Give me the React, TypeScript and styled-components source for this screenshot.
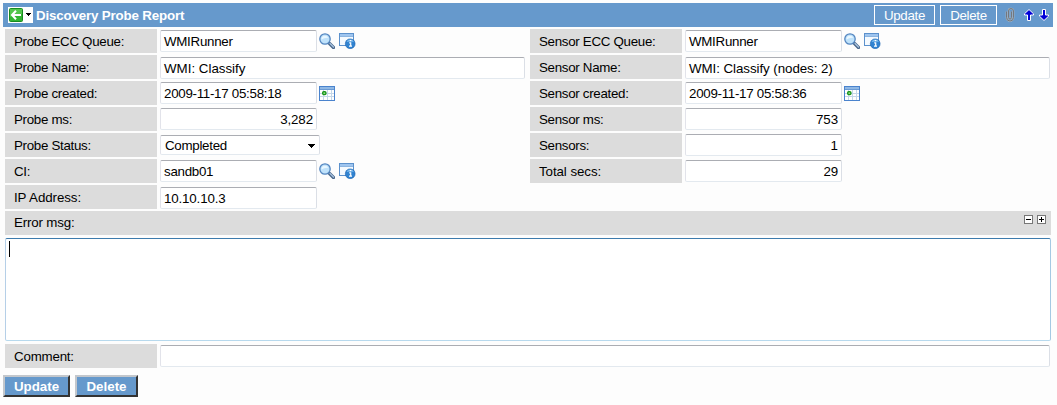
import React from "react";
import styled, { createGlobalStyle } from "styled-components";

const Global = createGlobalStyle`
  * { box-sizing: border-box; }
  body { margin: 0; background: #fdfdfd; color: #000; font: 13.33px/16px "Liberation Sans", Arial, sans-serif; }
  svg { display: block; flex: none; }
`;

const Page = styled.main`
  width: 1057px;
  height: 405px;
  padding: 3px 4px 0 3px;
  overflow: hidden;
`;

const Header = styled.header`
  display: flex;
  align-items: center;
  height: 24px;
  padding: 0 2px 0 5px;
  background: #6699cc;
`;

const BackButton = styled.button`
  display: flex;
  align-items: center;
  width: 25px;
  height: 16px;
  padding: 0;
  border: 0;
  background: #fff;
`;

const Title = styled.h1`
  flex: 1;
  margin: 0 0 0 3px;
  padding-top: 2px;
  color: #fff;
  font-size: 13.33px;
  letter-spacing: -0.16px;
  line-height: 16px;
  font-weight: bold;
`;

const HeaderButton = styled.button<{ $width: number }>`
  width: ${(p) => p.$width}px;
  height: 20px;
  margin-right: 5px;
  padding: 2px 0 0;
  border: 1px solid #fff;
  background: #6699cc;
  color: #fff;
  font: 13.33px/16px "Liberation Sans", Arial, sans-serif;
  letter-spacing: -0.3px;
`;

const HeaderIcons = styled.div`
  display: flex;
  align-items: center;
  width: 49px;
  padding-left: 1px;
`;

const Arrows = styled.div`
  display: flex;
  gap: 3px;
  margin-left: 6px;
`;

const Columns = styled.div`
  display: grid;
  grid-template-columns: 525px 1fr;
  align-items: start;
  padding: 2px 0 0 2px;
`;

const Column = styled.div`
  display: flex;
  flex-direction: column;
  gap: 2px;
`;

const Row = styled.div`
  display: flex;
  align-items: flex-start;
  height: 24px;
`;

const Label = styled.label<{ $spacing?: number }>`
  flex: none;
  width: 152px;
  height: 24px;
  margin-right: 3px;
  padding: 5px 9px 3px;
  background: #dcdcdc;
  letter-spacing: ${(p) => p.$spacing ?? -0.3}px;
  white-space: nowrap;
`;

const Field = styled.div<{ $width: number; $right?: boolean; $drop?: number; $spacing?: number }>`
  flex: none;
  width: ${(p) => p.$width}px;
  height: 22px;
  margin-top: ${(p) => p.$drop ?? 1}px;
  padding: 3px 3px 0;
  border: 1px solid;
  border-color: #abadb3 #dbdfe6 #e3e9ef #e2e3ea;
  border-radius: 2px;
  background: #fff;
  letter-spacing: ${(p) => p.$spacing ?? -0.28}px;
  text-align: ${(p) => (p.$right ? "right" : "left")};
  white-space: nowrap;
`;

const Select = styled(Field)`
  display: flex;
  justify-content: space-between;
  height: 20px;
  margin-top: 2px;
  padding: 2px 4px 0;
`;

const Tools = styled.div<{ $top?: number }>`
  display: flex;
  gap: 4px;
  margin: ${(p) => p.$top ?? 4}px 0 0 2px;
`;

const SectionBar = styled.div`
  display: flex;
  justify-content: space-between;
  width: 1046px;
  height: 24px;
  margin: 2px 0 0 2px;
  padding: 4px 5px 0 9px;
  background: #dcdcdc;
  letter-spacing: -0.18px;
`;

const Sizers = styled.div`
  display: flex;
  gap: 4px;
`;

const ErrorBox = styled.div`
  width: 1046px;
  height: 103px;
  margin: 3px 0 3px 2px;
  padding: 2px 3px;
  border: 1px solid;
  border-color: #3d7bad #a4c9e3 #b7d9ed #b5cfe7;
  border-radius: 2px;
  background: #fff;
`;

const Caret = styled.div`
  width: 1px;
  height: 16px;
  background: #000;
`;

const CommentRow = styled(Row)`
  margin-left: 2px;
`;

const Actions = styled.div`
  display: flex;
  gap: 5px;
  margin-top: 7px;
`;

const ActionButton = styled.button<{ $width: number }>`
  width: ${(p) => p.$width}px;
  height: 22px;
  padding: 2px 0 0;
  border: 2px solid;
  border-color: #c3c7cc #333 #333 #c3c7cc;
  background: #6699cc;
  color: #fff;
  font: bold 13.33px/16px "Liberation Sans", Arial, sans-serif;
`;

const BackIcon = () => (
  <svg width="25" height="16" viewBox="0 0 25 16">
    <rect x="1.5" y="1.5" width="13" height="13" rx="1" fill="#32b432" stroke="#188a20" />
    <path d="M2 2h12v5Q8 7 2 10Z" fill="#65cf5b" opacity=".65" />
    <path d="M8 3.7 4 8l4 4.3M4.5 8H13" fill="none" stroke="#fff" strokeWidth="2" />
    <path d="M18 6h5v1h-1v1h-1v1h-1V8h-1V7h-1Z" fill="#000" />
  </svg>
);

const clipPath = "M3.5 4.5v6a3.5 3.5 0 0 0 7 0V4a2.5 2.5 0 0 0-5 0v6.5a1.5 1.5 0 0 0 3 0V4.5";

const ClipIcon = () => (
  <svg width="14" height="16" viewBox="0 0 14 16">
    <path d={clipPath} fill="none" stroke="#b5bcc2" strokeWidth="1.6" />
    <path d={clipPath} fill="none" stroke="#62666c" strokeWidth=".8" />
  </svg>
);

const ArrowIcon = ({ down }: { down?: boolean }) => (
  <svg width="12" height="14" viewBox="0 0 12 14">
    <path
      d={down ? "M4.5 1.5h3V7h3v1.2L6 12.5 1.5 8.2V7h3Z" : "M4.5 12.5h3V7h3V5.8L6 1.5 1.5 5.8V7h3Z"}
      fill="#0000d8"
      stroke="#fff"
    />
  </svg>
);

const SearchIcon = () => (
  <svg width="16" height="16" viewBox="0 0 16 16">
    <path d="m10.5 10.5 4 4" stroke="#47658a" strokeWidth="3.2" strokeLinecap="round" />
    <path d="m11 10.5 3.5 3.5" stroke="#a9c3df" strokeWidth="1.3" strokeLinecap="round" />
    <circle cx="6" cy="6" r="5.2" fill="#bfe2fb" stroke="#5486c0" strokeWidth="1.3" />
    <path d="M2.5 6.5A3.6 3.6 0 0 1 6 2.7c2 0 3 1 3.2 2Q5 4.5 2.5 6.5Z" fill="#e9f7ff" />
  </svg>
);

const InfoIcon = () => (
  <svg width="17" height="16" viewBox="0 0 17 16">
    <rect x=".5" y=".5" width="14" height="12" fill="#f5faff" stroke="#5c91cc" />
    <path d="M1 1h13v2H1Z" fill="#9fc5ef" />
    <path d="M1 3.5h13" stroke="#8db5e0" />
    <circle cx="11.2" cy="10.8" r="4.9" fill="#3183d1" stroke="#1e65b0" strokeWidth=".6" />
    <path d="M7.5 9a4 4 0 0 1 7.4 0q-3-1-7.4 0Z" fill="#78b9ee" />
    <path d="M10.7 7.7h1.6M10.2 9.8h1.5v3.2M10 13.2h3" fill="none" stroke="#fff" strokeWidth="1.2" />
  </svg>
);

const CalendarIcon = () => (
  <svg width="16" height="15" viewBox="0 0 16 15">
    <rect x=".5" y=".5" width="15" height="14" fill="#fff" stroke="#4a83cd" />
    <path d="M1 1h14v2H1Z" fill="#8fb8e5" />
    <path d="M1 3.5h14" stroke="#6a9bd5" />
    <path d="M4.5 4v10M8.5 4v10M12.5 4v10M1 7.5h14M1 10.5h14" stroke="#c5d7e9" />
    <rect x="3.7" y="5.7" width="3.2" height="2.8" rx="1" fill="#b8f0a0" stroke="#16941a" strokeWidth="1.4" />
  </svg>
);

const SizeIcon = ({ plus }: { plus?: boolean }) => (
  <svg width="9" height="9" viewBox="0 0 9 9">
    <rect x=".5" y=".5" width="8" height="8" fill="#fff" stroke="#777" />
    <path d={plus ? "M2 4.5h5M4.5 2v5" : "M2 4.5h5"} stroke="#000" />
  </svg>
);

const SelectArrow = () => (
  <svg width="7" height="16" viewBox="0 0 7 16">
    <path d="M0 6h7v1H6v1H5v1H4v1H3V9H2V8H1V7H0Z" fill="#000" />
  </svg>
);

type Item = {
  label: string;
  value: string;
  width?: number;
  right?: boolean;
  drop?: number;
  labelSpacing?: number;
  spacing?: number;
  kind?: "lookup" | "date" | "select";
};

const probe: Item[] = [
  { label: "Probe ECC Queue:", value: "WMIRunner", kind: "lookup" },
  { label: "Probe Name:", value: "WMI: Classify", width: 365, drop: 2, spacing: 0 },
  { label: "Probe created:", value: "2009-11-17 05:58:18", kind: "date" },
  { label: "Probe ms:", value: "3,282", right: true, spacing: -0.1 },
  { label: "Probe Status:", value: "Completed", width: 160, kind: "select" },
  { label: "CI:", value: "sandb01", kind: "lookup" },
  { label: "IP Address:", value: "10.10.10.3", drop: 2, labelSpacing: -0.08, spacing: -0.15 },
];

const sensor: Item[] = [
  { label: "Sensor ECC Queue:", value: "WMIRunner", kind: "lookup" },
  { label: "Sensor Name:", value: "WMI: Classify (nodes: 2)", width: 365, drop: 2, spacing: -0.06 },
  { label: "Sensor created:", value: "2009-11-17 05:58:36", kind: "date" },
  { label: "Sensor ms:", value: "753", right: true, spacing: -0.1 },
  { label: "Sensors:", value: "1", right: true, spacing: 0 },
  { label: "Total secs:", value: "29", right: true, labelSpacing: -0.08, spacing: -0.1 },
];

const FormRow = ({ item }: { item: Item }) => (
  <Row>
    <Label $spacing={item.labelSpacing}>{item.label}</Label>
    {item.kind === "select" ? (
      <Select $width={item.width ?? 157}>
        {item.value}
        <SelectArrow />
      </Select>
    ) : (
      <Field $width={item.width ?? 157} $right={item.right} $drop={item.drop} $spacing={item.spacing}>
        {item.value}
      </Field>
    )}
    {item.kind === "lookup" && (
      <Tools>
        <SearchIcon />
        <InfoIcon />
      </Tools>
    )}
    {item.kind === "date" && (
      <Tools $top={5}>
        <CalendarIcon />
      </Tools>
    )}
  </Row>
);

export default function App() {
  return (
    <Page>
      <Global />
      <Header>
        <BackButton aria-label="Back">
          <BackIcon />
        </BackButton>
        <Title>Discovery Probe Report</Title>
        <HeaderButton $width={61}>Update</HeaderButton>
        <HeaderButton $width={57}>Delete</HeaderButton>
        <HeaderIcons>
          <ClipIcon />
          <Arrows>
            <ArrowIcon />
            <ArrowIcon down />
          </Arrows>
        </HeaderIcons>
      </Header>
      <Columns>
        <Column>
          {probe.map((item) => (
            <FormRow key={item.label} item={item} />
          ))}
        </Column>
        <Column>
          {sensor.map((item) => (
            <FormRow key={item.label} item={item} />
          ))}
        </Column>
      </Columns>
      <SectionBar>
        Error msg:
        <Sizers>
          <SizeIcon />
          <SizeIcon plus />
        </Sizers>
      </SectionBar>
      <ErrorBox>
        <Caret />
      </ErrorBox>
      <CommentRow>
        <Label $spacing={-0.2}>Comment:</Label>
        <Field $width={890} />
      </CommentRow>
      <Actions>
        <ActionButton $width={67}>Update</ActionButton>
        <ActionButton $width={63}>Delete</ActionButton>
      </Actions>
    </Page>
  );
}
